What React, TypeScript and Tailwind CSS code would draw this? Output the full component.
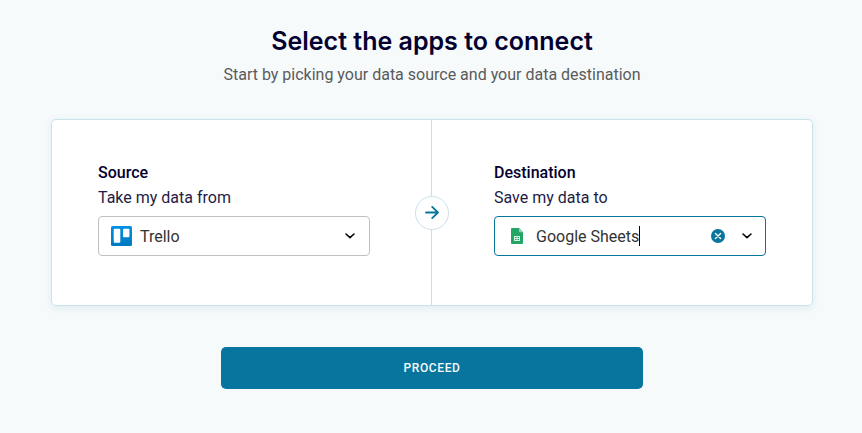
import React, { useState } from "react";

function Chevron() {
  return (
    <svg width="12" height="8" viewBox="0 0 12 8" fill="none" stroke="#050505" strokeWidth="1.6" aria-hidden="true">
      <path d="M2 2 L6 5.6 L10 2" strokeLinecap="round" strokeLinejoin="round" />
    </svg>
  );
}

function TrelloLogo() {
  return (
    <svg width="21" height="20" viewBox="0 0 21 20" aria-hidden="true">
      <defs>
        <linearGradient id="trello" x1="0" y1="0" x2="0" y2="1">
          <stop offset="0" stopColor="#0091e6" />
          <stop offset="1" stopColor="#0079bf" />
        </linearGradient>
      </defs>
      <rect width="21" height="20" rx="1.5" fill="url(#trello)" />
      <rect x="2.7" y="2.7" width="6.6" height="14" rx="1" fill="#fff" />
      <rect x="12" y="2.7" width="6.4" height="8.6" rx="1" fill="#fff" />
    </svg>
  );
}

function SheetsLogo() {
  return (
    <svg width="12" height="16" viewBox="0 0 12 16" aria-hidden="true">
      <path d="M1 0 H8 L12 4.3 V15 A1 1 0 0 1 11 16 H1 A1 1 0 0 1 0 15 V1 A1 1 0 0 1 1 0 Z" fill="#23a566" />
      <path d="M8 0 L12 4.3 H9 A1 1 0 0 1 8 3.3 Z" fill="#8ed1b1" />
      <path d="M3 8 H9 V13 H3 Z M4 9 V10 H5.6 V9 Z M6.4 9 V10 H8 V9 Z M4 11 V12 H5.6 V11 Z M6.4 11 V12 H8 V11 Z" fill="#f1faf5" fillOpacity="0.9" fillRule="evenodd" />
    </svg>
  );
}

export default function App() {
  const [source, setSource] = useState("Trello");
  const [destination, setDestination] = useState("Google Sheets");

  return (
    <main className="min-h-screen bg-[#f6fafb] pt-[25px] pb-11 pl-[51px] pr-[49px] font-['Roboto',sans-serif] text-base text-[#03002f]">
      <header className="text-center">
        <h1 className="font-['Inter',sans-serif] text-[25px] leading-8 font-semibold">
          Select the apps to connect
        </h1>
        <p className="mt-1.5 leading-6 text-[#5a5b5c]">
          Start by picking your data source and your data destination
        </p>
      </header>

      <section className="relative mt-8 grid grid-cols-2 rounded-[5px] border border-[#c9e2ec] bg-white shadow-[0_2px_8px_rgba(8,117,158,0.1)]">
        <div className="border-r border-[#c9dfe6] pt-10 pr-[61px] pb-[49px] pl-[46px]">
          <h2 className="leading-[25px] font-medium">Source</h2>
          <label htmlFor="source" className="block leading-[25px] text-[#1f1c46]">
            Take my data from
          </label>
          <div className="relative mt-1.5">
            <select
              id="source"
              value={source}
              onChange={(e) => setSource(e.target.value)}
              className="block h-10 w-full appearance-none rounded border border-[#bfbfbf] bg-white pt-0.5 pr-10 pl-[41px] text-[#333]"
            >
              <option>Trello</option>
            </select>
            <span className="pointer-events-none absolute inset-y-0 left-[13px] flex items-center">
              <TrelloLogo />
            </span>
            <span className="pointer-events-none absolute inset-y-0 right-3.5 flex items-center">
              <Chevron />
            </span>
          </div>
        </div>

        <div className="pt-10 pr-[46px] pb-[49px] pl-[62px]">
          <h2 className="leading-[25px] font-medium">Destination</h2>
          <label htmlFor="destination" className="block leading-[25px] text-[#1f1c46]">
            Save my data to
          </label>
          <div className="mt-1.5 flex h-10 items-center rounded border border-[#08759e] bg-white pr-3 pl-4">
            <SheetsLogo />
            <div className="ml-[13px] flex min-w-0 flex-1 items-center">
              <input
                id="destination"
                type="text"
                value={destination}
                onChange={(e) => setDestination(e.target.value)}
                className="field-sizing-content min-w-0 bg-transparent pt-0.5 text-[#333] caret-transparent outline-none"
              />
              <span className="h-5 w-px shrink-0 bg-black" />
            </div>
            <button type="button" aria-label="Clear destination" onClick={() => setDestination("")}>
              <svg width="14" height="14" viewBox="0 0 14 14" aria-hidden="true">
                <circle cx="7" cy="7" r="7" fill="#08759e" />
                <path d="M4.4 4.4 L9.6 9.6 M9.6 4.4 L4.4 9.6" stroke="#fff" strokeWidth="1.4" strokeLinecap="round" />
              </svg>
            </button>
            <button type="button" aria-label="Show destinations" className="ml-4">
              <Chevron />
            </button>
          </div>
        </div>

        {/* Direction marker over the divider */}
        <span className="absolute top-1/2 left-1/2 flex size-[34px] -translate-1/2 items-center justify-center rounded-full border border-[#c9e2ec] bg-white">
          <svg width="14" height="14" viewBox="0 0 14 14" fill="none" stroke="#08759e" strokeWidth="1.8" strokeLinecap="round" strokeLinejoin="round" aria-hidden="true">
            <path d="M1 6.5 H13 M7.2 0.9 L13 6.5 L7.2 12.1" />
          </svg>
        </span>
      </section>

      <button
        type="button"
        className="mx-auto mt-[41px] block h-[42px] w-full max-w-[422px] rounded-[5px] bg-[#08759e] text-xs font-medium tracking-wider text-[#f6fafb]"
      >
        PROCEED
      </button>
    </main>
  );
}
